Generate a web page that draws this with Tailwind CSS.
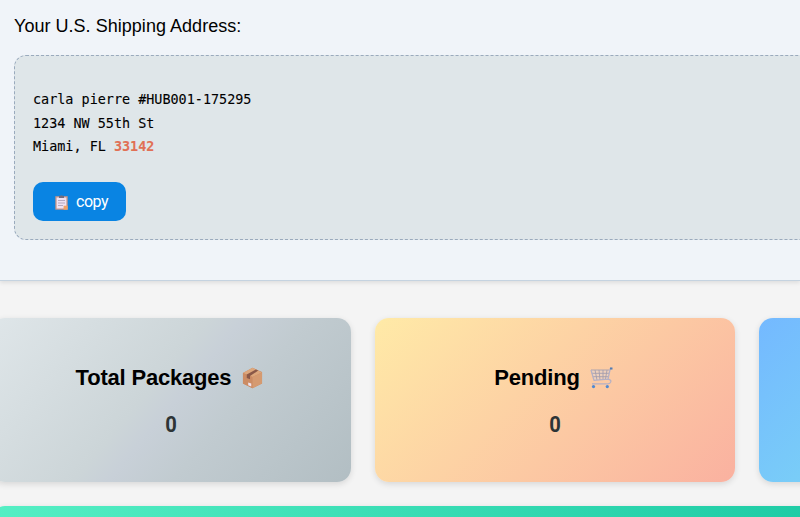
<!DOCTYPE html>
<html lang="en">
<head>
<meta charset="utf-8">
<title>Dashboard</title>
<script src="https://cdn.jsdelivr.net/npm/@tailwindcss/browser@4"></script>
</head>
<body class="h-[517px] w-[800px] overflow-hidden bg-[#f4f4f4] font-['Liberation_Sans',sans-serif] text-black">
<section class="h-[281px] w-[800px] overflow-hidden border-b border-[#c5d3e0] bg-[#f0f4f9] pl-3.5 pt-3.5 shadow-[0_2px_4px_rgba(0,0,0,0.09)]">
  <h2 class="h-[41px] text-[18px] leading-6 tracking-[0.03px]">Your U.S. Shipping Address:</h2>
  <div class="h-[185px] w-[820px] rounded-[12px] border border-dashed border-[#9aaabd] bg-[#dfe6e9] pl-[18px] pt-8">
    <address class="font-['DejaVu_Sans_Mono',monospace] text-[13.45px] leading-[23.5px] not-italic [-webkit-text-stroke:0.1px]">carla pierre #HUB001-175295<br>1234 NW 55th St<br>Miami, FL <strong class="text-[#e17055]">33142</strong></address>
    <button class="mt-[23px] flex h-[39px] w-[93px] items-center rounded-[10px] bg-[#0984e3] pl-[22px] pt-[2px] [font-family:Roboto,sans-serif] text-[16px] tracking-[-0.5px] text-white">
      <svg class="mr-[8px] h-[15px] w-[13px] shrink-0" viewBox="0 0 13 15">
        <path d="M.3 1.2h12.4V14.7H.3z" fill="#ca9586"/>
        <path d="M1.6 2.5h9.8v8.2l-2.8 2.8h-7z" fill="#eee2f3"/>
        <path d="M12.7 10.7H8.6v4h4.1z" fill="#f0a268"/>
        <path d="M4 .8h1.3Q6.5-.5 7.7.8H9v2.1H4z" fill="#716d80"/>
        <path d="M3 5.5h7M3 8h7M3 10.5h5" stroke="#a79bb4" stroke-width=".8"/>
      </svg>
      <span>copy</span>
    </button>
  </div>
</section>
<main class="-ml-[9px] grid h-[236px] w-[809px] grid-cols-[360px_360px_360px] gap-x-6 gap-y-6 overflow-hidden pt-9">
  <article class="mt-px h-[164px] rounded-[14px] bg-[linear-gradient(130deg,#dfe6e9_0%,#ccd5d8_44%,#c8d0d8_51%,#c1cbd0_64%,#b2bec3_100%)] pt-[46px] text-center shadow-[0_2px_6px_rgba(0,0,0,0.12)]">
    <h3 class="-ml-[3px] flex items-center justify-center text-[22px] leading-[28px] font-bold tracking-[-0.2px]">Total Packages
      <svg class="ml-[11px] h-[22px] w-[21px]" viewBox="0 0 22 22" preserveAspectRatio="none">
        <path d="M1 6 11 .8 21 5v11.5L11 21.3 1 16.6z" fill="#c98760"/>
        <path d="m1 6 10-5.2L21 5.5 11 10z" fill="#dda77c"/>
        <path d="m1 6 10 4v11.3L1 16.6z" fill="#cc8c64"/>
        <path d="M11 10 21 5.5v11l-10 4.8z" fill="#d59a70"/>
        <path d="m5 7.6 9.5-5.2L17 3.6 8.4 9v3.2L5 11z" fill="#8a5847"/>
        <path d="m6.5 15.4 3.2 1.2v2.9l-3.2-1.3z" fill="#eee3ee"/>
      </svg>
    </h3>
    <p class="mt-[18px] origin-center scale-x-90 [font-family:Roboto,sans-serif] text-[22.4px] leading-[28px] font-bold text-[#2d3436]">0</p>
  </article>
  <article class="mt-px h-[164px] rounded-[14px] bg-[linear-gradient(135deg,#ffeaa7,#fab1a0)] pt-[46px] text-center shadow-[0_2px_6px_rgba(0,0,0,0.12)]">
    <h3 class="-ml-[3px] flex items-center justify-center text-[22px] leading-[28px] font-bold tracking-[-0.2px]">Pending
      <svg class="ml-[10px] h-[22px] w-[23px]" viewBox="0 0 23 22" fill="none">
        <path d="m1 3 3 10.3 14-1.2L20 3z" fill="#ddd6dc" fill-opacity=".45"/>
        <path d="M1 3h18.5M1.8 6.3H19M2.8 9.7h15.5M5 3l2 10M9 3l1 10M13 3v9.7M17 3l-1.5 9" stroke="#a59eae" stroke-width=".9"/>
        <path d="M1 3 4 13.4l14-1.3L20.3 1.5H22M18 12.1q3.5.8 2.8 2.8-.7 2-3 2H2" stroke="#b5b0c4" stroke-width="1.3" stroke-linejoin="round"/>
        <path d="M20 1.5h2.5" stroke="#547db2" stroke-width="2"/>
        <circle cx="3.5" cy="19.6" r="1.6" fill="#4f89d2"/>
        <circle cx="17.3" cy="19.6" r="1.6" fill="#4f89d2"/>
      </svg>
    </h3>
    <p class="mt-[18px] origin-center scale-x-90 [font-family:Roboto,sans-serif] text-[22.4px] leading-[28px] font-bold text-[#2d3436]">0</p>
  </article>
  <article class="mt-px h-[164px] rounded-[14px] bg-[linear-gradient(135deg,#74b9ff,#81ecec)] shadow-[0_2px_6px_rgba(0,0,0,0.12)]"></article>
  <article class="col-span-3 h-[164px] rounded-[14px] bg-[linear-gradient(135deg,#55efc4,#00b894)] shadow-[0_2px_6px_rgba(0,0,0,0.12)]"></article>
</main>
</body>
</html>
